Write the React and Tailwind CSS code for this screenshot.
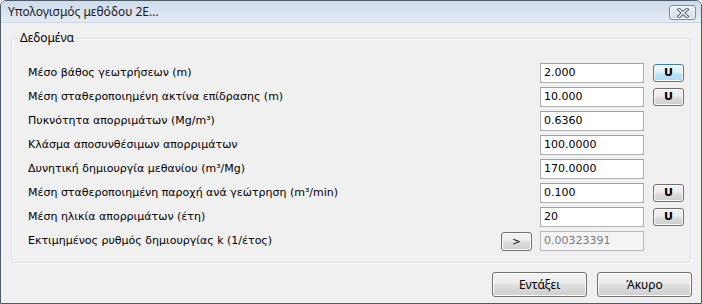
const rows = [
  { label: 'Μέσο βάθος γεωτρήσεων (m)', value: '2.000', unit: 'active' },
  { label: 'Μέση σταθεροποιημένη ακτίνα επίδρασης (m)', value: '10.000', unit: 'normal' },
  { label: 'Πυκνότητα απορριμάτων (Mg/m³)', value: '0.6360' },
  { label: 'Κλάσμα αποσυνθέσιμων απορριμάτων', value: '100.0000' },
  { label: 'Δυνητική δημιουργία μεθανίου (m³/Mg)', value: '170.0000' },
  { label: 'Μέση σταθεροποιημένη παροχή ανά γεώτρηση (m³/min)', value: '0.100', unit: 'normal' },
  { label: 'Μέση ηλικία απορριμάτων (έτη)', value: '20', unit: 'normal' },
  { label: 'Εκτιμημένος ρυθμός δημιουργίας k (1/έτος)', value: '0.00323391', calc: true },
]

const btn =
  'rounded-[3px] border border-[#707070] bg-[linear-gradient(to_bottom,#f2f2f2_0%,#ebebeb_48%,#dddddd_52%,#cfcfcf_100%)] shadow-[inset_0_0_0_1px_#fcfcfc] text-black flex items-center justify-center'

const btnActive =
  'rounded-[3px] border border-[#3c7fb1] bg-[linear-gradient(to_bottom,#eaf6fd_0%,#d9f0fc_48%,#bee6fd_52%,#a7d9f5_100%)] shadow-[inset_0_0_0_1px_#fcfcfc] text-black flex items-center justify-center'

function CloseIcon() {
  return (
    <svg width="14" height="10" viewBox="0 0 14 10">
      <path d="M3 1.5 L11 8.5 M11 1.5 L3 8.5" stroke="#5b6472" strokeWidth="3.4" strokeLinecap="square" />
      <path d="M3 1.5 L11 8.5 M11 1.5 L3 8.5" stroke="#ffffff" strokeWidth="1.4" strokeLinecap="square" />
    </svg>
  )
}

export default function App() {
  return (
    <div className="w-[702px] h-[304px] bg-[#f0f0f0] border border-[#4f5b69] rounded-t-[6px] flex flex-col overflow-hidden [font-family:'Noto_Sans',sans-serif]">
      {/* Title bar */}
      <div className="h-[22px] shrink-0 flex items-center justify-between pl-[7px] pr-[5px] bg-[linear-gradient(to_bottom,#cfdbea_0%,#dbe5f1_60%,#e3ebf5_100%)] border-b border-[#c9d4e1]">
        <span className="text-[12px] text-[#1a1a1a] leading-none">Υπολογισμός μεθόδου 2Ε...</span>
        <button className="w-[27px] h-[15px] mt-[2px] rounded-[3px] border border-[#7d8a9b] bg-[linear-gradient(to_bottom,#eef2f7,#d3dce7)] shadow-[inset_0_0_0_1px_#f7f9fc] flex items-center justify-center">
          <CloseIcon />
        </button>
      </div>

      {/* Group box */}
      <div className="relative mt-[15px] mx-[10px] h-[225px] rounded-[3px] border border-[#d5dfe5] shadow-[inset_1px_1px_0_#ffffff,1px_1px_0_#ffffff] pt-[22px] pl-[16px] pr-[6px]">
        <span className="absolute left-[6px] -top-[9px] px-[2px] bg-[#f0f0f0] text-[12px] leading-[16px] text-black">
          Δεδομένα
        </span>
        <div className="flex flex-col [font-family:'DejaVu_Sans',Verdana,sans-serif] text-[11px] text-black">
          {rows.map((r) => (
            <div key={r.label} className="h-[24px] flex items-center">
              <span className="flex-1 whitespace-nowrap">{r.label}</span>
              <div className="w-[31px] mr-[8px] flex justify-center">
                {r.calc && (
                  <button className={`${btn} w-[31px] h-[19px] text-[10px] mt-[1px]`}>&gt;</button>
                )}
              </div>
              <div
                className={
                  r.calc
                    ? 'w-[104px] h-[20px] border border-[#b5b8bd] bg-[#f4f4f4] text-[#7a7a7a] pl-[3px] flex items-center'
                    : 'w-[104px] h-[20px] border border-[#abadb3] border-t-[#9ea1a7] bg-white pl-[3px] flex items-center'
                }
              >
                {r.value}
              </div>
              <div className="w-[31px] ml-[9px] flex justify-center">
                {r.unit && (
                  <button className={`${r.unit === 'active' ? btnActive : btn} w-[31px] h-[18px] font-bold text-[11px]`}>U</button>
                )}
              </div>
            </div>
          ))}
        </div>
      </div>

      {/* Footer buttons */}
      <div className="mt-[9px] flex justify-end gap-[10px] pr-[9px]">
        <button className={`${btn} w-[95px] h-[25px] text-[12px]`}>Εντάξει</button>
        <button className={`${btn} w-[95px] h-[25px] text-[12px]`}>Άκυρο</button>
      </div>
    </div>
  )
}
